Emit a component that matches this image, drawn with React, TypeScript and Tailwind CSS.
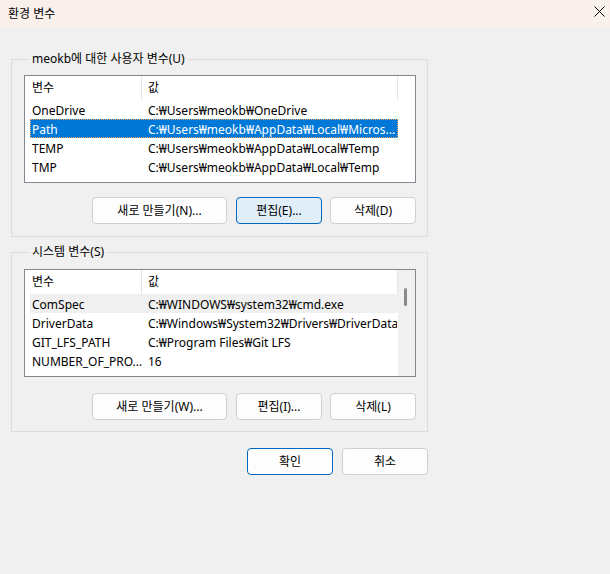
import React from "react";

type Row = { name: string; value: string; state?: "selected" | "hover" };

const userRows: Row[] = [
  { name: "OneDrive", value: "C:₩Users₩meokb₩OneDrive" },
  { name: "Path", value: "C:₩Users₩meokb₩AppData₩Local₩Micros...", state: "selected" },
  { name: "TEMP", value: "C:₩Users₩meokb₩AppData₩Local₩Temp" },
  { name: "TMP", value: "C:₩Users₩meokb₩AppData₩Local₩Temp" },
];

const sysRows: Row[] = [
  { name: "ComSpec", value: "C:₩WINDOWS₩system32₩cmd.exe", state: "hover" },
  { name: "DriverData", value: "C:₩Windows₩System32₩Drivers₩DriverData" },
  { name: "GIT_LFS_PATH", value: "C:₩Program Files₩Git LFS" },
  { name: "NUMBER_OF_PRO...", value: "16" },
];

function ListRow({ row }: { row: Row }) {
  const base = "flex h-[19px] pt-[2px] items-center whitespace-nowrap shrink-0";
  const cls =
    row.state === "selected"
      ? base + " bg-[#0078d7] text-white outline outline-1 outline-dotted outline-offset-[-1px] outline-[#f4a460]"
      : row.state === "hover"
      ? base + " bg-[#f0f0f0]"
      : base;
  return (
    <div className={cls}>
      <div className="w-[112px] pl-[2px] overflow-hidden">{row.name}</div>
      <div className="w-[255px] pl-[6px] overflow-hidden">{row.value}</div>
    </div>
  );
}

function ListBox({ rows, scroll }: { rows: Row[]; scroll?: boolean }) {
  return (
    <div className="flex w-[392px] h-[108px] border border-[#828790] bg-white overflow-hidden">
      <div className="flex flex-col flex-1 pl-[5px] overflow-hidden">
        <div className="flex h-[24px] shrink-0">
          <div className="w-[111px] pl-[2px] flex items-center">변수</div>
          <div className="w-[1px] bg-[#e5e5e5]" />
          <div className="w-[255px] pl-[6px] flex items-center">값</div>
          <div className="w-[1px] bg-[#e5e5e5]" />
        </div>
        {rows.map((r) => (
          <ListRow key={r.name} row={r} />
        ))}
      </div>
      {scroll ? (
        <div className="w-[17px] bg-[#f0f0f0] flex flex-col">
          <div className="mt-[18px] ml-[6px] w-[3px] h-[18px] rounded-full bg-[#8a8a8a]" />
        </div>
      ) : (
        <div className="w-[17px]" />
      )}
    </div>
  );
}

function Button({ label, cls }: { label: string; cls: string }) {
  return (
    <button className={"h-[27px] rounded-[4px] border text-[12px] leading-[16px] text-black flex items-center justify-center " + cls}>
      {label}
    </button>
  );
}

export default function App() {
  return (
    <div className="w-[610px] h-[574px] bg-[#f0f0f0] text-black text-[12px] leading-[16px] font-['Noto_Sans','Noto_Sans_CJK_KR',sans-serif] flex flex-col overflow-hidden">
      <div className="h-[27px] shrink-0 bg-[#f9efeb] flex items-center justify-between pl-[8px] pr-[5px]">
        <span className="text-[12px]">환경 변수</span>
        <svg width="11" height="11" viewBox="0 0 11 11" className="mb-[4px]">
          <path d="M0.5 0.5 L10.5 10.5 M10.5 0.5 L0.5 10.5" stroke="#000" strokeWidth="1" />
        </svg>
      </div>

      <div className="flex flex-col pl-[11px] w-[428px]">
        <fieldset className="mt-[24px] w-[417px] border border-[#dcdcdc] pl-[12px] pr-[10px] pb-[12px] pt-[8px]">
          <legend className="ml-[5px] px-[3px] leading-[16px]">meokb에 대한 사용자 변수(U)</legend>
          <ListBox rows={userRows} />
          <div className="flex justify-end gap-[8px] mt-[14px] w-[392px]">
            <Button label="새로 만들기(N)..." cls="w-[135px] mr-[1px] border-[#d0d0d0] bg-[#fdfdfd]" />
            <Button label="편집(E)..." cls="w-[86px] border-[#0067c0] bg-[#e0eef9]" />
            <Button label="삭제(D)" cls="w-[86px] border-[#d0d0d0] bg-[#fdfdfd]" />
          </div>
        </fieldset>

        <fieldset className="mt-[7px] w-[417px] border border-[#dcdcdc] pl-[12px] pr-[10px] pb-[11px] pt-[9px]">
          <legend className="ml-[5px] px-[3px] leading-[16px]">시스템 변수(S)</legend>
          <ListBox rows={sysRows} scroll />
          <div className="flex justify-end gap-[8px] mt-[16px] w-[392px]">
            <Button label="새로 만들기(W)..." cls="w-[135px] mr-[1px] border-[#d0d0d0] bg-[#fdfdfd]" />
            <Button label="편집(I)..." cls="w-[86px] border-[#d0d0d0] bg-[#fdfdfd]" />
            <Button label="삭제(L)" cls="w-[86px] border-[#d0d0d0] bg-[#fdfdfd]" />
          </div>
        </fieldset>

        <div className="flex justify-end gap-[9px] mt-[16px] w-[417px]">
          <Button label="확인" cls="w-[86px] border-[#0067c0] bg-[#fdfdfd]" />
          <Button label="취소" cls="w-[86px] border-[#d0d0d0] bg-[#fdfdfd]" />
        </div>
      </div>
    </div>
  );
}
